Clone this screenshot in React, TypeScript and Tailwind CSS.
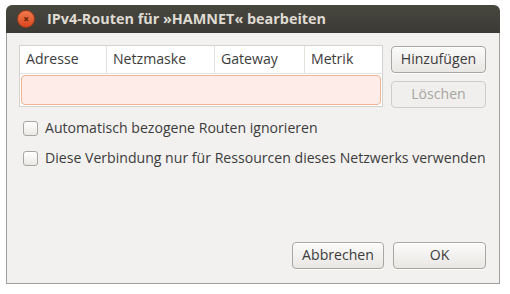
import React from "react";

const font = { fontFamily: '"Open Sans", "DejaVu Sans", sans-serif' };

function Checkbox({ label }: { label: string }) {
  return (
    <div className="flex items-center h-[18px]">
      <div className="w-[15px] h-[15px] shrink-0 rounded-[3px] border border-[#a8a6a2] bg-gradient-to-b from-[#ffffff] to-[#ebe9e6] ml-[4px]" />
      <span className="ml-[7px] text-[14.1px] text-[#3c3c3c] leading-none whitespace-nowrap">{label}</span>
    </div>
  );
}

function Btn({ children, disabled, className = "" }: { children: React.ReactNode; disabled?: boolean; className?: string }) {
  return (
    <div
      className={
        "h-[27px] rounded-[4px] border flex items-center justify-center text-[14.1px] leading-none whitespace-nowrap " +
        (disabled
          ? "border-[#cfcdca] bg-[#f0efed] text-[#a7a5a2] "
          : "border-[#a9a7a3] bg-gradient-to-b from-[#fbfbfa] to-[#e9e7e4] text-[#3c3c3c] shadow-[inset_0_1px_0_#ffffff,0_1px_0_rgba(255,255,255,0.8)] ") +
        className
      }
    >
      {children}
    </div>
  );
}

export default function App() {
  return (
    <div className="w-[510px] h-[294px] bg-white pt-[5px] pl-[6px]" style={font}>
      <div className="w-[494px] h-[279px] flex flex-col">
        <div className="h-[28px] rounded-t-[6px] bg-gradient-to-b from-[#48473f] to-[#3a3935] flex items-center">
          <div className="ml-[11px] w-[18px] h-[18px] rounded-full bg-gradient-to-b from-[#f27a4c] to-[#d9461c] border border-[#9c3a1b] flex items-center justify-center text-[#5a1c08] text-[10px] font-bold leading-none">
            ×
          </div>
          <span className="ml-[12px] text-[14.4px] font-bold text-[#dfdbd2] leading-none whitespace-nowrap">IPv4-Routen für »HAMNET« bearbeiten</span>
        </div>
        <div className="flex-1 bg-[#f2f1f0] border-x border-b border-[#a19f9b] flex flex-col px-[12px] pt-[12px] pb-[14px]">
          <div className="flex">
            <div className="w-[364px] h-[62px] bg-white border border-[#d4d2ce] flex flex-col">
              <div className="h-[28px] flex text-[14.1px] text-[#3c3c3c] leading-none border-b border-[#e4e2df]">
                <div className="w-[87px] border-r border-[#e4e2df] flex items-center pl-[6px]">Adresse</div>
                <div className="w-[108px] border-r border-[#e4e2df] flex items-center pl-[6px]">Netzmaske</div>
                <div className="w-[90px] border-r border-[#e4e2df] flex items-center pl-[6px]">Gateway</div>
                <div className="flex-1 flex items-center pl-[6px]">Metrik</div>
              </div>
              <div className="flex-1 p-[1px] pt-[1px]">
                <div className="h-full rounded-[4px] border border-[#f2b294] bg-[#fdece7]" />
              </div>
            </div>
            <div className="ml-[8px] flex flex-col gap-[8px] pt-[1px]">
              <Btn className="w-[95px]">Hinzufügen</Btn>
              <Btn disabled className="w-[95px]">Löschen</Btn>
            </div>
          </div>
          <div className="mt-[11px] flex flex-col gap-[12px]">
            <Checkbox label="Automatisch bezogene Routen ignorieren" />
            <Checkbox label="Diese Verbindung nur für Ressourcen dieses Netzwerks verwenden" />
          </div>
          <div className="flex-1" />
          <div className="flex justify-end gap-[9px] pr-[1px]">
            <Btn className="w-[92px]">Abbrechen</Btn>
            <Btn className="w-[93px]">OK</Btn>
          </div>
        </div>
      </div>
    </div>
  );
}
